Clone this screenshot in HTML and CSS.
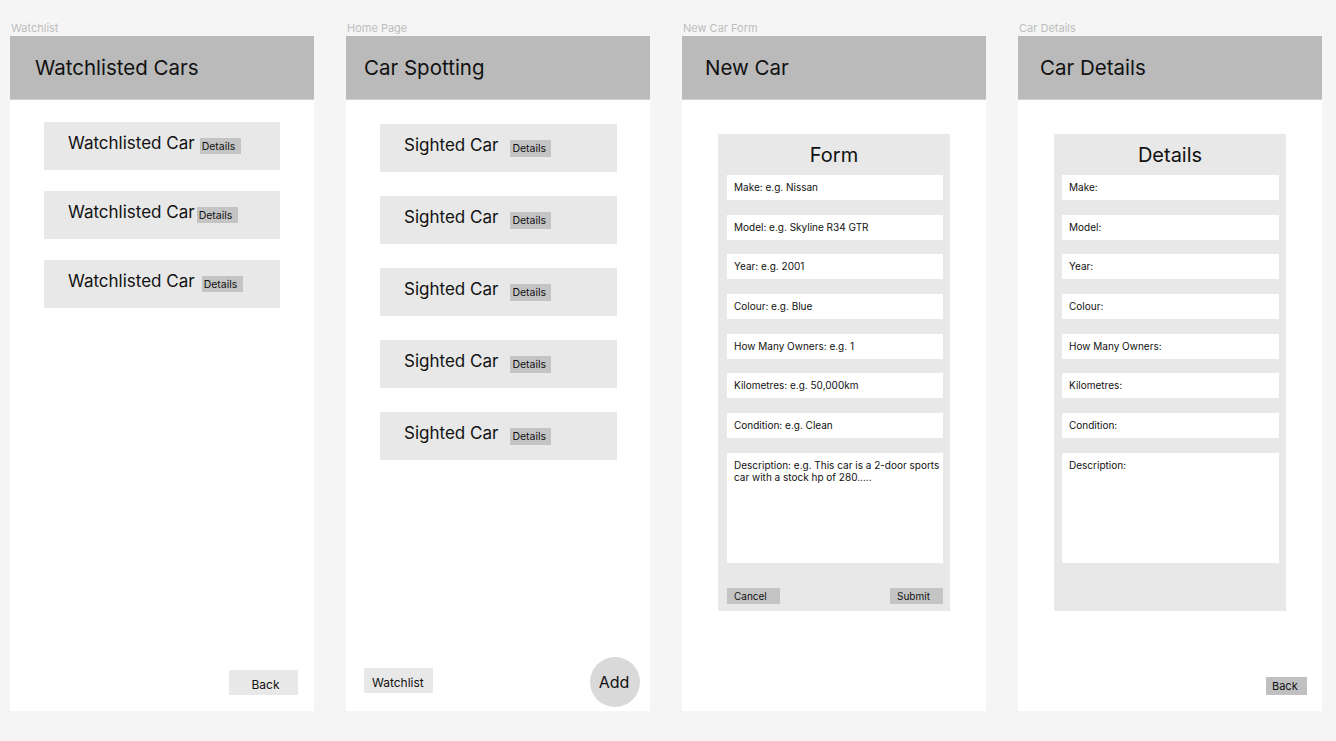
FILE: index.html
```html
<!DOCTYPE html>
<html>
<head>
<meta charset="utf-8">
<link rel="stylesheet" href="styles.css">
</head>
<body>
<div class="canvas">
  <section class="col">
    <div class="label">Watchlist</div>
    <div class="frame">
      <header class="bar bar--p25"><h1>Watchlisted Cars</h1></header>
      <div class="list list--watch">
        <div class="card"><span class="card-title">Watchlisted Car</span><span class="chip">Details</span></div>
        <div class="card"><span class="card-title">Watchlisted Car</span><span class="chip chip--tight">Details</span></div>
        <div class="card"><span class="card-title">Watchlisted Car</span><span class="chip chip--wide">Details</span></div>
      </div>
      <div class="foot foot--end">
        <button class="btn btn--back">Back</button>
      </div>
    </div>
  </section>

  <section class="col">
    <div class="label">Home Page</div>
    <div class="frame">
      <header class="bar bar--p18"><h1>Car Spotting</h1></header>
      <div class="list list--sighted">
        <div class="card card--sighted"><span class="card-title">Sighted Car</span><span class="chip">Details</span></div>
        <div class="card card--sighted"><span class="card-title">Sighted Car</span><span class="chip">Details</span></div>
        <div class="card card--sighted"><span class="card-title">Sighted Car</span><span class="chip">Details</span></div>
        <div class="card card--sighted"><span class="card-title">Sighted Car</span><span class="chip">Details</span></div>
        <div class="card card--sighted"><span class="card-title">Sighted Car</span><span class="chip">Details</span></div>
      </div>
      <div class="foot foot--home">
        <button class="btn btn--watch">Watchlist</button>
        <button class="fab">Add</button>
      </div>
    </div>
  </section>

  <section class="col">
    <div class="label">New Car Form</div>
    <div class="frame">
      <header class="bar bar--p23"><h1>New Car</h1></header>
      <div class="panel">
        <h2 class="panel-title">Form</h2>
        <div class="field">Make: e.g. Nissan</div>
        <div class="field">Model: e.g. Skyline R34 GTR</div>
        <div class="field">Year: e.g. 2001</div>
        <div class="field">Colour: e.g. Blue</div>
        <div class="field">How Many Owners: e.g. 1</div>
        <div class="field">Kilometres: e.g. 50,000km</div>
        <div class="field">Condition: e.g. Clean</div>
        <div class="field field--area">Description: e.g. This car is a 2-door sports car with a stock hp of 280.....</div>
        <div class="form-actions">
          <button class="sbtn">Cancel</button>
          <button class="sbtn sbtn--submit">Submit</button>
        </div>
      </div>
    </div>
  </section>

  <section class="col">
    <div class="label">Car Details</div>
    <div class="frame">
      <header class="bar bar--p22"><h1>Car Details</h1></header>
      <div class="panel panel--details">
        <h2 class="panel-title">Details</h2>
        <div class="field">Make:</div>
        <div class="field">Model:</div>
        <div class="field">Year:</div>
        <div class="field">Colour:</div>
        <div class="field">How Many Owners:</div>
        <div class="field">Kilometres:</div>
        <div class="field">Condition:</div>
        <div class="field field--area">Description:</div>
      </div>
      <div class="foot foot--details">
        <button class="btn btn--small">Back</button>
      </div>
    </div>
  </section>
</div>
</body>
</html>
```

FILE: styles.css
```css
* { box-sizing: border-box; }
html, body { margin: 0; padding: 0; }
body {
  background: #f5f5f5;
  font-family: Inter, "Liberation Sans", sans-serif;
  color: #111;
  width: 1336px;
  height: 741px;
  overflow: hidden;
}
.canvas {
  display: flex;
  gap: 32px;
  padding: 20px 0 0 10px;
}
.col { width: 304px; display: flex; flex-direction: column; }
.label {
  height: 16px;
  font-size: 11px;
  line-height: 16px;
  color: #bdbdbd;
  padding-left: 1px;
}
.frame {
  height: 675px;
  background: #fff;
  display: flex;
  flex-direction: column;
}
.bar {
  height: 64px;
  background: #bababa;
  display: flex;
  align-items: center;
  border-bottom: 1px solid #cfcfcf;
}
.bar h1 {
  margin: 0;
  font-weight: 400;
  font-size: 20.5px;
  margin-top: -1px;
}
.bar--p25 { padding-left: 25px; }
.bar--p18 { padding-left: 18px; }
.bar--p23 { padding-left: 23px; }
.bar--p22 { padding-left: 22px; }

.list { display: flex; flex-direction: column; margin-left: 34px; }
.list--watch { margin-top: 22px; gap: 21px; }
.list--sighted { margin-top: 24px; gap: 24px; }
.card {
  width: 236px;
  height: 48px;
  background: #e8e8e8;
  display: flex;
  align-items: center;
  padding-left: 24px;
}
.card-title { font-size: 17px; margin-top: -6px; }
.chip {
  margin-left: 5px;
  background: #c4c4c4;
  font-size: 10.5px;
  height: 16px;
  line-height: 18px;
  width: 41px;
  padding-left: 2px;
}
.chip--tight { margin-left: 2px; }
.chip--wide { margin-left: 7px; }
.card--sighted { width: 237px; }
.card--sighted .card-title { margin-top: -6px; }
.card--sighted .chip { margin-left: 12px; height: 17px; }

.foot { margin-top: auto; display: flex; align-items: flex-end; }
.foot--end { justify-content: flex-end; padding: 0 16px 16px 0; }
.foot--home { justify-content: space-between; padding: 0 10px 4px 18px; }
.foot--details { justify-content: flex-end; padding: 0 15px 16px 0; }

button {
  font-family: inherit;
  border: 0;
  margin: 0;
  padding: 0;
  color: #111;
}
.btn {
  background: #e8e8e8;
  font-size: 12px;
}
.btn--back { width: 69px; height: 25px; line-height: 29px; padding-left: 4px; }
.btn--watch { width: 69px; height: 25px; margin-bottom: 14px; text-align: left; padding-left: 8px; line-height: 29px; }
.btn--small { width: 41px; height: 18px; background: #c0c0c0; font-size: 11px; text-align: left; padding-left: 6px; line-height: 14px; }
.fab {
  width: 50px;
  height: 50px;
  border-radius: 50%;
  background: #d9d9d9;
  font-size: 16px;
  padding-right: 2px;
}

.panel {
  margin: 34px 0 0 36px;
  width: 232px;
  height: 477px;
  background: #e8e8e8;
  display: flex;
  flex-direction: column;
  padding-left: 9px;
}
.panel--details { padding-left: 8px; }
.panel-title {
  margin: 0;
  height: 41px;
  font-size: 20px;
  font-weight: 400;
  text-align: center;
  line-height: 42px;
  padding-right: 9px;
}
.panel--details .panel-title { padding-right: 8px; }
.field {
  width: 216px;
  height: 25px;
  background: #fff;
  font-size: 10px;
  line-height: 25px;
  padding-left: 7px;
  margin-bottom: 14.67px;
  flex: none;
}
.panel--details .field { width: 217px; }
.field--area {
  height: 110px;
  line-height: 12px;
  padding: 6px 2px 0 7px;
  margin-bottom: 0;
}
.form-actions {
  margin-top: 25px;
  display: flex;
  justify-content: space-between;
  width: 216px;
}
.sbtn {
  width: 53px;
  height: 16px;
  background: #c4c4c4;
  font-size: 10px;
  text-align: left;
  padding-left: 7px;
  line-height: 16px;
}
.sbtn--submit { padding-left: 7px; }
```
